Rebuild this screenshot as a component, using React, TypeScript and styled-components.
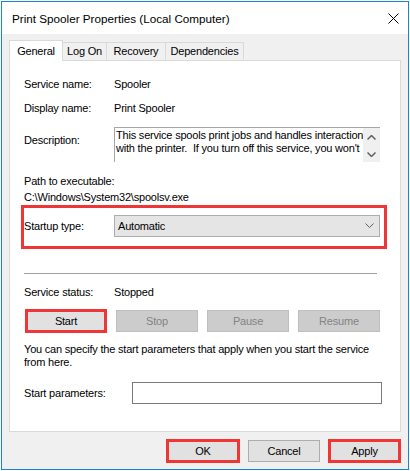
import React from "react";
import styled, { createGlobalStyle } from "styled-components";

const GlobalStyle = createGlobalStyle`
  html, body {
    margin: 0;
    padding: 0;
    background: #ffffff;
  }
  body {
    font-family: "Liberation Sans", Arial, sans-serif;
    font-size: 11px;
    letter-spacing: -0.2px;
    color: #000000;
  }
`;

const RED = "#ef3636";

const Window = styled.div`
  margin: 1px 0 0 1px;
  width: 408px;
  height: 469px;
  box-sizing: border-box;
  border: 1px solid #1b82d6;
  background: #f0f0f0;
  display: flex;
  flex-direction: column;
`;

const TitleBar = styled.div`
  height: 32px;
  flex: none;
  background: #ffffff;
  display: flex;
  align-items: center;
  justify-content: space-between;
  padding: 0 9px 0 10px;
  font-size: 11.7px;
  letter-spacing: 0;
`;

const Body = styled.div`
  flex: 1;
  display: flex;
  flex-direction: column;
  padding: 6px 7px 0 7px;
`;

const TabRow = styled.div`
  height: 20px;
  display: flex;
  align-items: flex-end;
  position: relative;
  z-index: 1;
`;

const Tab = styled.div<{ $w: number; $active?: boolean }>`
  width: ${(p) => p.$w}px;
  height: ${(p) => (p.$active ? 21 : 18)}px;
  margin-bottom: ${(p) => (p.$active ? -1 : 0)}px;
  margin-right: -1px;
  box-sizing: border-box;
  border: 1px solid #d9d9d9;
  border-bottom: ${(p) => (p.$active ? "none" : "1px solid transparent")};
  background: ${(p) => (p.$active ? "#ffffff" : "#f0f0f0")};
  display: flex;
  align-items: ${(p) => (p.$active ? "flex-start" : "center")};
  justify-content: center;
  padding-top: ${(p) => (p.$active ? 3 : 0)}px;
  line-height: 15px;
`;

const Panel = styled.div`
  height: 372px;
  box-sizing: border-box;
  border: 1px solid #d9d9d9;
  background: #ffffff;
  padding: 0 17px 0 14px;
  display: flex;
  flex-direction: column;
`;

const Row = styled.div<{ $mt: number; $labelW?: number }>`
  display: flex;
  align-items: center;
  margin-top: ${(p) => p.$mt}px;
  line-height: 16px;
  & > :first-child {
    width: ${(p) => p.$labelW ?? 90}px;
    flex: none;
  }
`;

const TopRow = styled(Row)`
  align-items: flex-start;
  & > :first-child {
    padding-top: 5px;
  }
`;

const Line = styled.div<{ $mt: number; $lh?: number }>`
  margin-top: ${(p) => p.$mt}px;
  line-height: ${(p) => p.$lh ?? 16}px;
`;

const TextArea = styled.div`
  width: 266px;
  height: 35px;
  box-sizing: border-box;
  border-top: 1px solid #a6a6a6;
  border-left: 1px solid #a6a6a6;
  display: flex;
`;

const TextAreaText = styled.div`
  flex: 1;
  overflow: hidden;
  padding: 1px 0 0 1px;
  line-height: 13px;
  white-space: nowrap;
`;

const ScrollBar = styled.div`
  width: 17px;
  background: #f0f0f0;
  display: flex;
  flex-direction: column;
  align-items: center;
  justify-content: space-between;
  padding: 7px 0 5px;
`;

const Highlight = styled.div`
  width: 366px;
  height: 44px;
  box-sizing: border-box;
  margin-left: -3px;
  border: 3px solid ${RED};
  display: flex;
  align-items: center;
  padding-bottom: 3px;
  & > :first-child {
    width: 90px;
    flex: none;
  }
`;

const Select = styled.div`
  width: 266px;
  height: 22px;
  box-sizing: border-box;
  background: #e5e5e5;
  border: 1px solid #adadad;
  display: flex;
  align-items: center;
  justify-content: space-between;
  padding: 0 5px 0 3px;
`;

const Separator = styled.div`
  margin-top: 24px;
  width: 353px;
  height: 1px;
  background: #a0a0a0;
`;

const ButtonRow = styled.div`
  margin-top: 9px;
  margin-left: 1px;
  height: 24px;
  display: flex;
  align-items: center;
  gap: 9px;
`;

const Button = styled.div<{ $w: number; $hl?: boolean; $disabled?: boolean }>`
  width: ${(p) => p.$w}px;
  height: ${(p) => (p.$hl ? 24 : 22)}px;
  box-sizing: border-box;
  border: ${(p) =>
    p.$hl ? `3px solid ${RED}` : `1px solid ${p.$disabled ? "#bfbfbf" : "#adadad"}`};
  background: ${(p) => (p.$disabled ? "#cccccc" : "#e1e1e1")};
  color: ${(p) => (p.$disabled ? "#838383" : "#000000")};
  display: flex;
  align-items: center;
  justify-content: center;
  flex: none;
`;

const Footer = styled.div`
  height: 37px;
  display: flex;
  align-items: center;
  justify-content: flex-end;
  gap: 8px;
  padding-bottom: 1px;
`;

const Input = styled.div`
  width: 250px;
  height: 22px;
  box-sizing: border-box;
  border: 1px solid #7a7a7a;
  background: #ffffff;
`;

const CloseIcon = () => (
  <svg width="11" height="11" viewBox="0 0 11 11">
    <path d="M0.5 0.5 L10.5 10.5 M10.5 0.5 L0.5 10.5" stroke="#000" strokeWidth="1" />
  </svg>
);

const Chevron = ({ up, bold }: { up?: boolean; bold?: boolean }) => (
  <svg width="9" height="5" viewBox="0 0 9 5">
    <polyline
      points={up ? "0.5,4.5 4.5,0.5 8.5,4.5" : "0.5,0.5 4.5,4.5 8.5,0.5"}
      fill="none"
      stroke="#606060"
      strokeWidth={bold ? 1.5 : 1}
    />
  </svg>
);

export default function App() {
  return (
    <>
      <GlobalStyle />
      <Window>
        <TitleBar>
          <span>Print Spooler Properties (Local Computer)</span>
          <CloseIcon />
        </TitleBar>
        <Body>
          <TabRow>
            <Tab $w={54} $active>
              General
            </Tab>
            <Tab $w={45}>Log On</Tab>
            <Tab $w={60}>Recovery</Tab>
            <Tab $w={79}>Dependencies</Tab>
          </TabRow>
          <Panel>
            <Row $mt={15}>
              <span>Service name:</span>
              <span>Spooler</span>
            </Row>
            <Row $mt={8}>
              <span>Display name:</span>
              <span>Print Spooler</span>
            </Row>
            <TopRow $mt={11}>
              <span>Description:</span>
              <TextArea>
                <TextAreaText>
                  <div>This service spools print jobs and handles interaction</div>
                  <div>with the printer.&nbsp; If you turn off this service, you won't</div>
                </TextAreaText>
                <ScrollBar>
                  <Chevron up bold />
                  <Chevron bold />
                </ScrollBar>
              </TextArea>
            </TopRow>
            <Line $mt={11}>Path to executable:</Line>
            <Line $mt={1} $lh={15}>
              C:\Windows\System32\spoolsv.exe
            </Line>
            <Highlight>
              <span>Startup type:</span>
              <Select>
                <span>Automatic</span>
                <Chevron />
              </Select>
            </Highlight>
            <Separator />
            <Row $mt={10}>
              <span>Service status:</span>
              <span>Stopped</span>
            </Row>
            <ButtonRow>
              <Button $w={82} $hl>
                Start
              </Button>
              <Button $w={82} $disabled>
                Stop
              </Button>
              <Button $w={82} $disabled>
                Pause
              </Button>
              <Button $w={82} $disabled>
                Resume
              </Button>
            </ButtonRow>
            <Line $mt={10} $lh={13}>
              You can specify the start parameters that apply when you start the service
              <br />
              from here.
            </Line>
            <Row $mt={13} $labelW={108}>
              <span>Start parameters:</span>
              <Input />
            </Row>
          </Panel>
          <Footer>
            <Button $w={74} $hl>
              OK
            </Button>
            <Button $w={72}>Cancel</Button>
            <Button $w={73} $hl>
              Apply
            </Button>
          </Footer>
        </Body>
      </Window>
    </>
  );
}
